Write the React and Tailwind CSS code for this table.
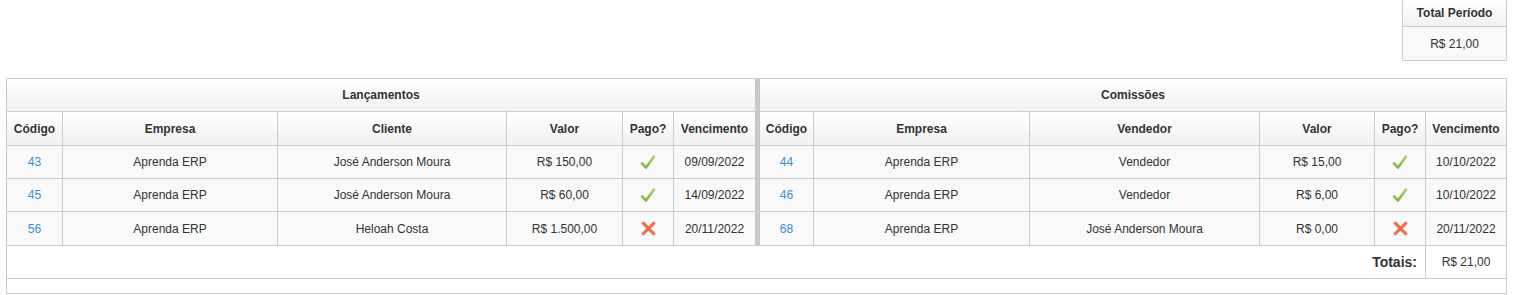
import React from 'react';

const leftCols = [
  { label: 'Código', w: 'w-[56px]' },
  { label: 'Empresa', w: 'w-[215px]' },
  { label: 'Cliente', w: 'w-[229px]' },
  { label: 'Valor', w: 'w-[116px]' },
  { label: 'Pago?', w: 'w-[51px]' },
  { label: 'Vencimento', w: 'w-[81px]' },
];

const rightCols = [
  { label: 'Código', w: 'w-[54px]' },
  { label: 'Empresa', w: 'w-[216px]' },
  { label: 'Vendedor', w: 'w-[230px]' },
  { label: 'Valor', w: 'w-[115px]' },
  { label: 'Pago?', w: 'w-[51px]' },
  { label: 'Vencimento', w: 'w-[80px]' },
];

const lancamentos = [
  { codigo: '43', empresa: 'Aprenda ERP', pessoa: 'José Anderson Moura', valor: 'R$ 150,00', pago: true, venc: '09/09/2022', h: 'h-[33px]' },
  { codigo: '45', empresa: 'Aprenda ERP', pessoa: 'José Anderson Moura', valor: 'R$ 60,00', pago: true, venc: '14/09/2022', h: 'h-[33px]' },
  { codigo: '56', empresa: 'Aprenda ERP', pessoa: 'Heloah Costa', valor: 'R$ 1.500,00', pago: false, venc: '20/11/2022', h: 'h-[34px]' },
];

const comissoes = [
  { codigo: '44', empresa: 'Aprenda ERP', pessoa: 'Vendedor', valor: 'R$ 15,00', pago: true, venc: '10/10/2022', h: 'h-[33px]' },
  { codigo: '46', empresa: 'Aprenda ERP', pessoa: 'Vendedor', valor: 'R$ 6,00', pago: true, venc: '10/10/2022', h: 'h-[33px]' },
  { codigo: '68', empresa: 'Aprenda ERP', pessoa: 'José Anderson Moura', valor: 'R$ 0,00', pago: false, venc: '20/11/2022', h: 'h-[34px]' },
];

const CheckIcon = () => (
  <svg width="16" height="16" viewBox="0 0 16 16">
    <defs>
      <linearGradient id="chk" x1="0" y1="0" x2="0" y2="1">
        <stop offset="0" stopColor="#a6d46a" />
        <stop offset="1" stopColor="#7cb94a" />
      </linearGradient>
    </defs>
    <path d="M2 9.5 L6 13.5 L14 2.5" fill="none" stroke="url(#chk)" strokeWidth="2.6" strokeLinecap="round" strokeLinejoin="round" />
  </svg>
);

const CrossIcon = () => (
  <svg width="15" height="15" viewBox="0 0 15 15">
    <path d="M2.5 2.5 L12.5 12.5 M12.5 2.5 L2.5 12.5" fill="none" stroke="#f0704a" strokeWidth="3.2" strokeLinecap="square" />
  </svg>
);

const Cell = ({ w, last, children, className = '' }) => (
  <div className={`${w} shrink-0 flex items-center justify-center ${last ? '' : 'border-r border-[#cccccc]'} ${className}`}>
    {children}
  </div>
);

const SubTable = ({ title, cols, rows }) => (
  <div className="flex flex-col">
    <div className="h-[33px] border-b border-[#cccccc] bg-gradient-to-b from-white to-[#f1f1f1] flex items-center justify-center font-bold">
      {title}
    </div>
    <div className="h-[34px] flex border-b border-[#cccccc] bg-gradient-to-b from-white to-[#f1f1f1] font-bold">
      {cols.map((c, i) => (
        <Cell key={c.label} w={c.w} last={i === cols.length - 1}>{c.label}</Cell>
      ))}
    </div>
    {rows.map((r) => (
      <div key={r.codigo} className={`${r.h} flex border-b border-[#cccccc] bg-[#f9f9f9]`}>
        <Cell w={cols[0].w}><a className="text-[#3a8ed6]">{r.codigo}</a></Cell>
        <Cell w={cols[1].w}>{r.empresa}</Cell>
        <Cell w={cols[2].w}>{r.pessoa}</Cell>
        <Cell w={cols[3].w}>{r.valor}</Cell>
        <Cell w={cols[4].w}>{r.pago ? <CheckIcon /> : <CrossIcon />}</Cell>
        <Cell w={cols[5].w} last>{r.venc}</Cell>
      </div>
    ))}
  </div>
);

const App = () => {
  return (
    <div className="min-h-screen bg-white text-[12px] text-[#333333]" style={{ fontFamily: '"Liberation Sans", Arial, sans-serif' }}>
      <div className="ml-[6px] w-[1501px]">
        {/* Total do periodo */}
        <div className="flex justify-end">
          <div className="w-[105px] border-l border-r border-b border-[#cccccc]">
            <div className="h-[27px] border-b border-[#cccccc] bg-gradient-to-b from-white to-[#f1f1f1] flex items-center justify-center font-bold">
              Total Período
            </div>
            <div className="h-[33px] bg-[#f9f9f9] flex items-center justify-center">
              R$ 21,00
            </div>
          </div>
        </div>

        {/* Tabela principal */}
        <div className="mt-[17px] border border-[#cccccc]">
          <div className="flex">
            <SubTable title="Lançamentos" cols={leftCols} rows={lancamentos} />
            <div className="w-[5px] shrink-0 bg-[#c8c8c8] border-b border-[#cccccc]" />
            <SubTable title="Comissões" cols={rightCols} rows={comissoes} />
          </div>
          <div className="h-[33px] flex border-b border-[#cccccc] bg-white">
            <div className="flex-1 flex items-center justify-end pr-[8px] border-r border-[#cccccc] font-bold text-[14px]">
              Totais:
            </div>
            <div className="w-[80px] shrink-0 flex items-center justify-center">R$ 21,00</div>
          </div>
          <div className="h-[14px] bg-white" />
        </div>
      </div>
    </div>
  );
};

export default App;
